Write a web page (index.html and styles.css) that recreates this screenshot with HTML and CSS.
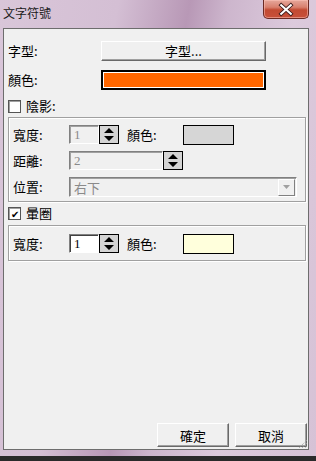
FILE: index.html
```html
<!DOCTYPE html>
<html lang="zh-Hant">
<head>
  <meta charset="UTF-8">
  <title>文字符號</title>
  <link rel="stylesheet" href="styles.css">
</head>
<body>

  <div class="window">
    <!-- Title bar -->
    <div class="titlebar">
      <span class="title">文字符號</span>
      <div class="close">
        <svg width="46" height="19" viewBox="0 0 46 19">
          <path d="M18 5 L28 14 M28 5 L18 14" stroke="#3a1a1a" stroke-width="4" stroke-linecap="square"/>
          <path d="M18 5 L28 14 M28 5 L18 14" stroke="#fff" stroke-width="2.2" stroke-linecap="square"/>
        </svg>
      </div>
    </div>

    <!-- Client area -->
    <div class="client">
      <div class="row">
        <span class="label">字型:</span>
        <button class="btn font-btn">字型...</button>
      </div>
      <div class="row color-row">
        <span class="label">顏色:</span>
        <div class="swatch-big"><div class="swatch-fill"></div></div>
      </div>

      <div class="check check-shadow">
        <span class="box"></span>
        <span>陰影:</span>
      </div>
      <div class="group">
        <div class="grow">
          <span class="glabel">寬度:</span>
          <div class="input disabled small">1</div>
          <svg class="spin" width="20" height="19" viewBox="0 0 20 19">
            <rect x="0.5" y="0.5" width="19" height="18" fill="#d4d4d4" stroke="#000"/>
            <path d="M10 3 L15 8 L5 8 Z M5 11 L15 11 L10 16 Z" fill="#000"/>
          </svg>
          <span class="glabel clabel">顏色:</span>
          <div class="swatch gray"></div>
        </div>
        <div class="grow">
          <span class="glabel">距離:</span>
          <div class="input disabled medium">2</div>
          <svg class="spin" width="20" height="19" viewBox="0 0 20 19">
            <rect x="0.5" y="0.5" width="19" height="18" fill="#d4d4d4" stroke="#000"/>
            <path d="M10 3 L15 8 L5 8 Z M5 11 L15 11 L10 16 Z" fill="#000"/>
          </svg>
        </div>
        <div class="grow">
          <span class="glabel">位置:</span>
          <div class="input disabled combo">
            <span>右下</span>
            <span class="drop">
              <svg width="9" height="5" viewBox="0 0 9 5"><path d="M1 0 L8 0 L4.5 4 Z" fill="#a0a0a0"/></svg>
            </span>
          </div>
        </div>
      </div>

      <div class="check check-halo">
        <span class="box checked">✔</span>
        <span>暈圈</span>
      </div>
      <div class="group group-halo">
        <div class="grow">
          <span class="glabel">寬度:</span>
          <div class="input small">1</div>
          <svg class="spin" width="20" height="19" viewBox="0 0 20 19">
            <rect x="0.5" y="0.5" width="19" height="18" fill="#d4d4d4" stroke="#000"/>
            <path d="M10 3 L15 8 L5 8 Z M5 11 L15 11 L10 16 Z" fill="#000"/>
          </svg>
          <span class="glabel clabel">顏色:</span>
          <div class="swatch cream"></div>
        </div>
      </div>

      <div class="actions">
        <button class="btn action">確定</button>
        <button class="btn action">取消</button>
      </div>
      <svg class="grip" width="10" height="10" viewBox="0 0 10 10">
        <path d="M9 1 L1 9 M9 4 L4 9 M9 7 L7 9" stroke="#a0a0a0" stroke-width="1" stroke-dasharray="1 1"/>
      </svg>
    </div>
  </div>

</body>
</html>
```

FILE: styles.css
```css
* {
  margin: 0;
  padding: 0;
  box-sizing: border-box;
}

body {
  width: 316px;
  height: 461px;
  background-color: #2a2a2a;
  font-family: "Noto Sans CJK TC", "Liberation Sans", sans-serif;
  font-size: 13px;
  color: #000;
  overflow: hidden;
}

/* Window frame */
.window {
  width: 316px;
  height: 456px;
  background: linear-gradient(100deg, #d9c6d9 0%, #d4bfd4 30%, #b898b6 48%, #cdb6cd 58%, #dccadc 75%, #d6c2d6 100%);
  display: flex;
  flex-direction: column;
  position: relative;
}

.titlebar {
  height: 28px;
  display: flex;
  justify-content: space-between;
  align-items: flex-start;
  padding-left: 3px;
}

.title {
  margin-top: 5px;
  font-size: 12px;
  line-height: 16px;
  color: #1a1a1a;
}

.close {
  width: 46px;
  height: 19px;
  margin-right: 7px;
  border: 1px solid #6b2a24;
  border-top: none;
  border-radius: 0 0 5px 5px;
  background: linear-gradient(#e6a89c 0%, #d8806e 40%, #c24a32 55%, #c8503a 100%);
  box-shadow: inset 0 0 0 1px rgba(255, 200, 190, 0.5);
  display: flex;
}

/* Client area */
.client {
  height: 422px;
  margin: 0 7px 0 3px;
  border: 1px solid #6d6d6d;
  background-color: #f0f0f0;
  padding: 12px 1px 2px 4px;
  display: flex;
  flex-direction: column;
  position: relative;
}

.row {
  display: flex;
  align-items: center;
  height: 20px;
}

.color-row {
  margin-top: 9px;
}

.label {
  width: 93px;
  line-height: 14px;
}

.btn {
  font-family: inherit;
  font-size: 13px;
  color: #000;
  background-color: #f0f0f0;
  border: 1px solid;
  border-color: #fff #696969 #696969 #fff;
  box-shadow: inset -1px -1px 0 #a0a0a0;
}

.font-btn {
  width: 165px;
  height: 20px;
  line-height: 14px;
}

.swatch-big {
  width: 165px;
  height: 20px;
  border: 2px solid #000;
  padding: 1px;
  background-color: #fff;
}

.swatch-fill {
  width: 100%;
  height: 100%;
  background-color: #ff6600;
}

/* Checkboxes */
.check {
  display: flex;
  align-items: center;
  gap: 5px;
  height: 14px;
  line-height: 14px;
}

.check-shadow {
  margin-top: 9px;
}

.check-halo {
  margin-top: 4px;
}

.box {
  width: 13px;
  height: 13px;
  border: 1px solid #555;
  background-color: #fff;
  box-shadow: inset 1px 1px 0 #a0a0a0;
  font-size: 10px;
  line-height: 11px;
  text-align: center;
}

/* Group boxes */
.group {
  width: 298px;
  margin-top: 4px;
  border: 1px solid #a0a0a0;
  box-shadow: inset 1px 1px 0 #fff, 1px 1px 0 #fff;
  padding: 7px 0 4px 4px;
  display: flex;
  flex-direction: column;
  gap: 7px;
}

.group-halo {
  margin-top: 5px;
  padding: 8px 0 7px 4px;
}

.grow {
  display: flex;
  align-items: center;
  height: 19px;
}

.grow:last-child {
  height: 20px;
}

.group-halo .grow {
  height: 19px;
}

.glabel {
  width: 56px;
  line-height: 14px;
}

.clabel {
  margin-left: 8px;
}

.input {
  height: 19px;
  background-color: #fff;
  border: 1px solid;
  border-color: #808080 #fff #fff #808080;
  box-shadow: inset 1px 1px 0 #404040;
  padding-left: 4px;
  line-height: 17px;
  font-family: "Liberation Serif", serif;
  font-size: 13px;
}

.input.disabled {
  background-color: #f0f0f0;
  color: #8a8a8a;
  box-shadow: inset 1px 1px 0 #a0a0a0;
}

.small {
  width: 30px;
}

.medium {
  width: 94px;
}

.combo {
  width: 228px;
  height: 20px;
  display: flex;
  justify-content: space-between;
  align-items: center;
  padding: 1px;
  padding-left: 4px;
  font-family: "Noto Sans CJK TC", sans-serif;
  font-size: 13px;
}

.drop {
  width: 17px;
  height: 17px;
  background-color: #f0f0f0;
  border: 1px solid;
  border-color: #fff #808080 #808080 #fff;
  display: flex;
  align-items: center;
  justify-content: center;
}

.spin {
  display: block;
  flex-shrink: 0;
}

.swatch {
  width: 51px;
  height: 20px;
  border: 1px solid #000;
}

.gray {
  background-color: #d6d6d6;
}

.cream {
  background-color: #ffffdc;
}

/* Bottom buttons */
.actions {
  margin-top: auto;
  display: flex;
  justify-content: flex-end;
  gap: 6px;
}

.action {
  width: 72px;
  height: 24px;
}

.grip {
  position: absolute;
  right: 0;
  bottom: 0;
}
```
